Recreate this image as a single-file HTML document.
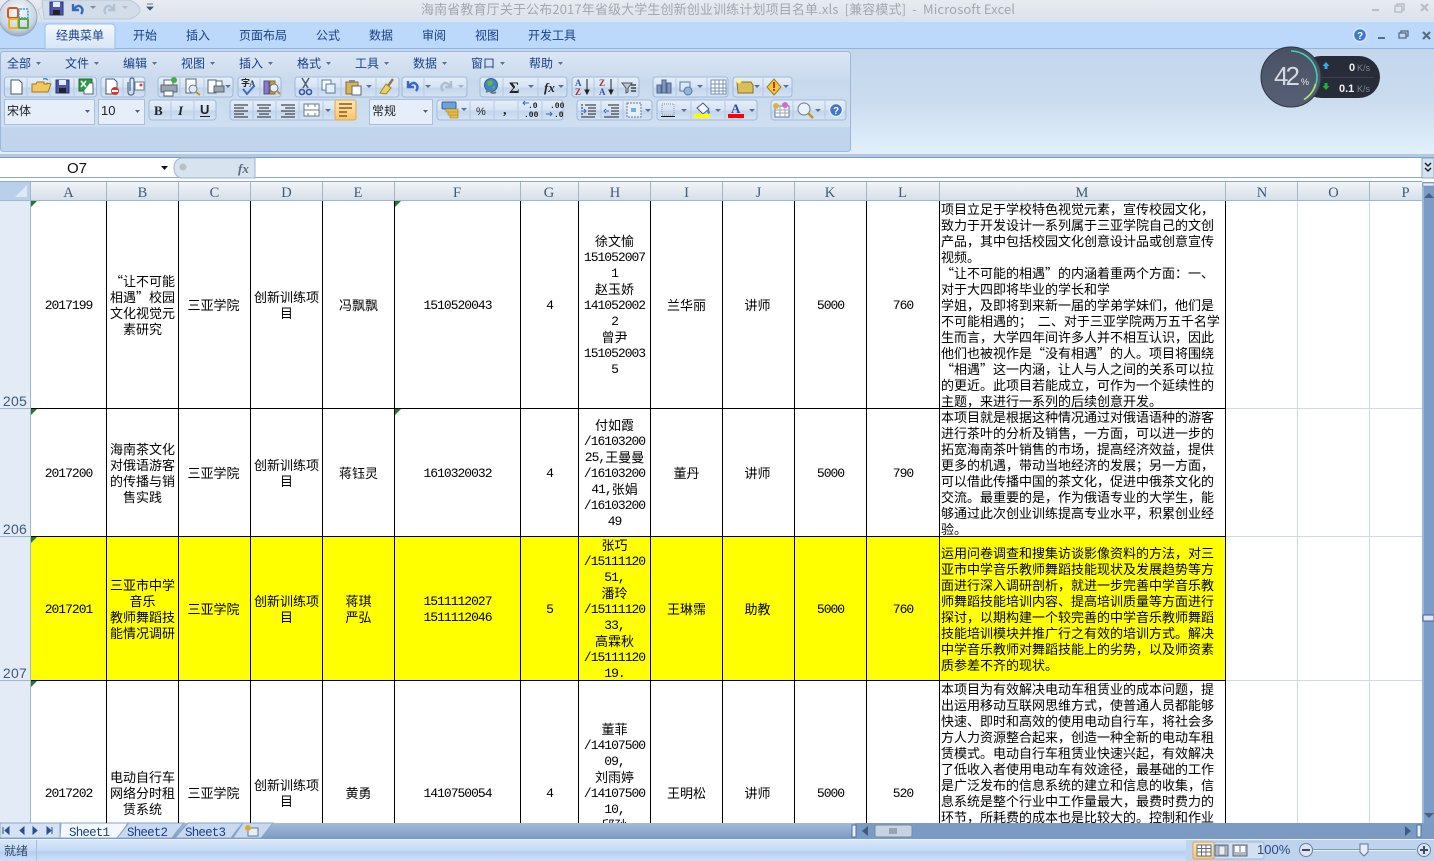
<!DOCTYPE html>
<html lang="zh"><head><meta charset="utf-8"><title>Excel</title>
<style>
html,body{margin:0;padding:0;background:#fff;overflow:hidden}
#p{position:relative;width:1434px;height:861px;overflow:hidden;font:13px/16px "WenQuanYi Zen Hei","Noto Sans CJK SC",sans-serif;color:#000;background:#fff}
#g{position:absolute;left:31px;top:201px;width:1391px;height:622px;overflow:hidden}
.c{position:absolute;display:flex;flex-direction:column;justify-content:center;text-align:center;white-space:nowrap;overflow:visible}
.c div{height:16px}
.n{font:13px/16px "Liberation Mono",monospace;letter-spacing:-1px;transform:translateY(1px)}
span.n{display:inline-block;vertical-align:top}
.m{position:absolute;left:910px;white-space:pre}
.m div{height:16px}
.vl{position:absolute;top:0;width:1px;height:622px;background:#000}
.hl{position:absolute;left:0;width:1195px;height:1px;background:#000}
.lv{position:absolute;top:0;width:1px;height:622px;background:#d0d7e5}
.lh{position:absolute;left:1195px;width:196px;height:1px;background:#d0d7e5}
.t{position:absolute;left:0;top:0;overflow:hidden}
text{white-space:pre}
.tri{position:absolute;width:0;height:0;border-top:6px solid #1e7b2e;border-right:6px solid transparent}
.rn{position:absolute;left:0;width:30px;height:16px;font:14px/16px "Liberation Sans",sans-serif;color:#3e5a78;text-align:center;letter-spacing:.3px}
</style></head><body><div id="p">

<svg class="t" width="1434" height="861" viewBox="0 0 1434 861" font-family="'Noto Sans CJK SC','Liberation Sans',sans-serif">
<defs>
<linearGradient id="tb" x1="0" y1="0" x2="0" y2="1"><stop offset="0" stop-color="#e9ebef"/><stop offset="1" stop-color="#dbe2ec"/></linearGradient>
<linearGradient id="rib" x1="0" y1="0" x2="0" y2="1"><stop offset="0" stop-color="#c3d6ec"/><stop offset=".5" stop-color="#cbdcef"/><stop offset="1" stop-color="#e2f0fb"/></linearGradient>
<linearGradient id="pan" x1="0" y1="0" x2="0" y2="1"><stop offset="0" stop-color="#dbe6f4"/><stop offset=".3" stop-color="#c9d9ed"/><stop offset=".75" stop-color="#cfdff1"/><stop offset=".76" stop-color="#c1d5ec"/><stop offset="1" stop-color="#c1d4eb"/></linearGradient>
<linearGradient id="pill" x1="0" y1="0" x2="0" y2="1"><stop offset="0" stop-color="#e6eff9"/><stop offset=".5" stop-color="#d6e3f3"/><stop offset=".55" stop-color="#c3d5ec"/><stop offset="1" stop-color="#d5e3f4"/></linearGradient>
<linearGradient id="tab" x1="0" y1="0" x2="0" y2="1"><stop offset="0" stop-color="#f4f8fd"/><stop offset="1" stop-color="#d7e5f6"/></linearGradient>
<linearGradient id="hdr" x1="0" y1="0" x2="0" y2="1"><stop offset="0" stop-color="#f2f5f9"/><stop offset="1" stop-color="#d6dfea"/></linearGradient>
<linearGradient id="st" x1="0" y1="0" x2="0" y2="1"><stop offset="0" stop-color="#d8e6f8"/><stop offset=".5" stop-color="#c6daf5"/><stop offset=".55" stop-color="#b5cdf0"/><stop offset="1" stop-color="#cfe0f7"/></linearGradient>
<linearGradient id="sb" x1="0" y1="0" x2="0" y2="1"><stop offset="0" stop-color="#a3bad9"/><stop offset="1" stop-color="#7a9ac4"/></linearGradient>
<linearGradient id="or" x1="0" y1="0" x2="0" y2="1"><stop offset="0" stop-color="#fde5b4"/><stop offset="1" stop-color="#fbc76c"/></linearGradient>
<radialGradient id="off" cx=".5" cy=".35" r=".7"><stop offset="0" stop-color="#fbfbfb"/><stop offset=".7" stop-color="#c6d4e4"/><stop offset="1" stop-color="#8d9bb0"/></radialGradient>
<linearGradient id="dial" x1="0" y1="0" x2="0" y2="1"><stop offset="0" stop-color="#4a5164"/><stop offset="1" stop-color="#565f74"/></linearGradient>
</defs>

<!-- title bar -->
<rect width="1434" height="21" fill="url(#tb)"/>
<rect x="0" y="21" width="1434" height="28" fill="#bcd8fb"/>
<rect x="0" y="21" width="1434" height="1" fill="#d3e4f8"/>
<rect x="0" y="48" width="1434" height="1" fill="#8fb4e2"/>
<rect x="0" y="49" width="1434" height="105" fill="url(#rib)"/>
<rect x="0" y="154" width="1434" height="3" fill="#b3c9e3"/>
<path d="M42 0v5q0 3-4 5l4 11" fill="none" stroke="#c5d3e4"/>
<path d="M42 0H130q10 5 10 10t-10 9H44z" fill="#d3dde9" stroke="#bbc8d8"/>
<text x="421" y="14" font-size="13" fill="#a2a8af" textLength="594" lengthAdjust="spacing">海南省教育厅关于公布2017年省级大学生创新创业训练计划项目名单.xls  [兼容模式]  -  Microsoft Excel</text>

<!-- office button -->
<circle cx="18" cy="17" r="19" fill="url(#off)" stroke="#9aa8ba"/>
<rect x="8" y="8" width="10" height="10" rx="2" fill="none" stroke="#d9541e" stroke-width="2"/>
<rect x="19" y="9" width="9" height="9" rx="1" fill="none" stroke="#3c9bd0" stroke-width="1.5" stroke-dasharray="2 1"/>
<rect x="9" y="19" width="9" height="9" rx="1" fill="none" stroke="#f2b01e" stroke-width="2"/>
<rect x="19" y="19" width="9" height="9" rx="1" fill="none" stroke="#5ca63a" stroke-width="2"/>

<!-- quick access -->
<rect x="50" y="2" width="13" height="13" fill="#4c55b0" stroke="#2a3180"/><rect x="53" y="2" width="7" height="5" fill="#e8edf5"/><rect x="53" y="10" width="7" height="5" fill="#222"/>
<path d="M73 4v6h6M74 9q4-5 7-2t0 7" fill="none" stroke="#3569c4" stroke-width="2.400"/>
<path d="M90 6l3 3 3-3z" fill="#7e8ca0"/>
<path d="M114 4v6h-6M113 9q-4-5-7-2t0 7" fill="none" stroke="#b3c2d2" stroke-width="2.400"/>
<path d="M122 6l3 3 3-3z" fill="#b4becb"/>
<path d="M147 4h6M147 7l3 3 3-3z" fill="#3e5676" stroke="#3e5676" stroke-width=".8"/>

<!-- window controls -->
<rect x="1372" y="9" width="7" height="2" fill="#b6bdc7"/>
<rect x="1397" y="4" width="7" height="6" fill="none" stroke="#b6bdc7" stroke-width="1.400"/><rect x="1395" y="6" width="7" height="6" fill="#e2e6ec" stroke="#b6bdc7" stroke-width="1.400"/>
<path d="M1421 4l7 7M1428 4l-7 7" stroke="#b6bdc7" stroke-width="2.200"/>
<circle cx="1360" cy="35" r="6.500" fill="#3f78c9" stroke="#dfe9f6" stroke-width="1.400"/><text x="1360" y="39" font-size="10" font-weight="bold" fill="#fff" text-anchor="middle" font-family="'Liberation Sans'">?</text>
<rect x="1378" y="37" width="7" height="2" fill="#5a6c80"/>
<rect x="1401" y="31" width="7" height="5" fill="none" stroke="#5a6c80" stroke-width="1.300"/><rect x="1399" y="33" width="7" height="5" fill="#bcd8fb" stroke="#5a6c80" stroke-width="1.300"/>
<path d="M1423 32l7 7M1430 32l-7 7" stroke="#5a6c80" stroke-width="2.200"/>

<!-- ribbon tabs -->
<path d="M45 49V28q0-4 4-4h62q4 0 4 4v21z" fill="url(#tab)" stroke="#9ebfe8"/>
<g font-size="12" fill="#17408a">
<text x="56" y="39.500" textLength="48">经典菜单</text>
<text x="133" y="39.500" textLength="24">开始</text>
<text x="186" y="39.500" textLength="24">插入</text>
<text x="239" y="39.500" textLength="48">页面布局</text>
<text x="316" y="39.500" textLength="24">公式</text>
<text x="369" y="39.500" textLength="24">数据</text>
<text x="422" y="39.500" textLength="24">审阅</text>
<text x="475" y="39.500" textLength="24">视图</text>
<text x="528" y="39.500" textLength="48">开发工具</text>
</g>

<!-- panel -->
<rect x="0.500" y="51.500" width="850" height="100" rx="3" fill="url(#pan)" stroke="#9bb8dc"/>
<g font-size="12" fill="#17408a">
<text x="7" y="67.500">全部</text><text x="65" y="67.500">文件</text><text x="123" y="67.500">编辑</text><text x="181" y="67.500">视图</text><text x="239" y="67.500">插入</text><text x="297" y="67.500">格式</text><text x="355" y="67.500">工具</text><text x="413" y="67.500">数据</text><text x="471" y="67.500">窗口</text><text x="529" y="67.500">帮助</text>
</g>
<g fill="#5a7196">
<path d="M36 62h5l-2.500 3zM94 62h5l-2.500 3zM152 62h5l-2.500 3zM210 62h5l-2.500 3zM268 62h5l-2.500 3zM326 62h5l-2.500 3zM384 62h5l-2.500 3zM442 62h5l-2.500 3zM500 62h5l-2.500 3zM558 62h5l-2.500 3z"/>
</g>

<!-- toolbar pills -->
<g fill="url(#pill)" stroke="#9fb9da">
<rect x="4.500" y="77" width="92" height="20" rx="3"/><rect x="101" y="77" width="44" height="20" rx="3"/>
<rect x="158" y="77" width="75" height="20" rx="3"/><rect x="238" y="77" width="43" height="20" rx="3"/>
<rect x="295" y="77" width="104" height="20" rx="3"/><rect x="402" y="77" width="65" height="20" rx="3"/>
<rect x="480" y="77" width="87" height="20" rx="3"/><rect x="572" y="77" width="67" height="20" rx="3"/>
<rect x="653" y="77" width="75" height="20" rx="3"/><rect x="733" y="77" width="59" height="20" rx="3"/>
<rect x="149" y="100" width="67" height="20" rx="3"/><rect x="230" y="100" width="126" height="20" rx="3"/>
<rect x="437" y="100" width="126" height="20" rx="3"/><rect x="577" y="100" width="75" height="20" rx="3"/>
<rect x="657" y="100" width="100" height="20" rx="3"/><rect x="771" y="100" width="75" height="20" rx="3"/>
</g>
<path d="M27 78v18M50 78v18M74 78v18M123 78v18M180 78v18M204 78v18M260 78v18M318 78v18M341 78v18M376 78v18M424 78v18M503 78v18M538 78v18M594 78v18M618 78v18M676 78v18M707 78v18M763 78v18M171 101v18M194 101v18M253 101v18M276 101v18M299 101v18M323 101v18M470 101v18M494 101v18M518 101v18M542 101v18M601 101v18M623 101v18M691 101v18M725 101v18M793 101v18M825 101v18" stroke="#b5c9e2" fill="none"/>
<rect x="335" y="100" width="21" height="20" rx="2" fill="url(#or)" stroke="#d9a85c"/>

<!-- row2 icons -->
<path d="M11 80h8l3 3v11H11z" fill="#fff" stroke="#4a5a6e"/>
<path d="M32 92V84h4l1-2h7v2h3v-1l4 1-3 8z" fill="#f2c75c" stroke="#9a7a2a"/><path d="M43 79q3-1 5 1" stroke="#3c7fc0" fill="none" stroke-width="1.400"/>
<rect x="56" y="80" width="13" height="13" fill="#4c55b0" stroke="#2a3180"/><rect x="59" y="80" width="7" height="5" fill="#e8edf5"/><rect x="59" y="88" width="7" height="5" fill="#222"/>
<rect x="79" y="79" width="13" height="12" fill="#2e9a45" stroke="#1f6b30"/><path d="M81 81l5 6M86 81l-5 6" stroke="#fff" stroke-width="1.400"/><path d="M90 83h3v11H84v-3" fill="#fff" stroke="#56687e"/>
<path d="M106 79h8l3 3v12h-11z" fill="#fff" stroke="#4a5a6e"/><circle cx="115" cy="91" r="4" fill="#d8342c"/><rect x="112" y="90" width="6" height="2" fill="#fff"/>
<path d="M128 82v10q0 3 3 3t3-3V80q0-2-2-2t-2 2v11" fill="none" stroke="#4d6a8a" stroke-width="1.200"/><rect x="135" y="82" width="9" height="8" fill="#fff" stroke="#6a7c92"/><circle cx="141" cy="85" r="1.500" fill="#d44"/>
<rect x="161" y="85" width="16" height="7" fill="#9aa5b2" stroke="#5a6470"/><rect x="164" y="80" width="9" height="5" fill="#fff" stroke="#5a6470"/><rect x="164" y="91" width="9" height="5" fill="#fff" stroke="#5a6470"/><circle cx="174" cy="80" r="3" fill="#4aa948"/>
<path d="M186 79h10v8l-3 1v5h-7z" fill="#fff" stroke="#5a6470"/><circle cx="193" cy="89" r="4" fill="#dfe9f4" stroke="#6a7a90"/><path d="M196 92l4 3" stroke="#c98e22" stroke-width="2"/>
<rect x="208" y="80" width="8" height="13" fill="#fff" stroke="#5a6470"/><rect x="214" y="86" width="10" height="6" fill="#9aa5b2" stroke="#5a6470"/><rect x="216" y="81" width="6" height="5" fill="#fff" stroke="#5a6470"/><path d="M225 85h6l-3 3z" fill="#5a7196"/>
<text x="241" y="86" font-size="9" font-weight="bold" fill="#222">字</text><text x="249" y="87" font-size="9" font-weight="bold" fill="#2a4a9a" font-family="'Liberation Serif'">A</text><path d="M243 89l4 5 7-8" fill="none" stroke="#3b6ec4" stroke-width="2"/>
<rect x="264" y="81" width="5" height="13" fill="#8c78c8" stroke="#5a4a90"/><rect x="270" y="81" width="5" height="13" fill="#c7a040" stroke="#8a6e20"/><circle cx="274" cy="88" r="4" fill="#e6eef8" stroke="#607088"/><path d="M277 91l3 3" stroke="#c98e22" stroke-width="2"/>
<path d="M302 78l6 10M309 78l-6 10" stroke="#4a5d78" stroke-width="1.500"/><circle cx="302" cy="92" r="2.500" fill="none" stroke="#3a55a4" stroke-width="1.600"/><circle cx="309" cy="92" r="2.500" fill="none" stroke="#3a55a4" stroke-width="1.600"/>
<rect x="322" y="80" width="9" height="10" fill="#fff" stroke="#5a78a0"/><rect x="326" y="84" width="9" height="9" fill="#e6f0fa" stroke="#5a78a0"/>
<rect x="346" y="82" width="12" height="12" fill="#d9b457" stroke="#8a6d25"/><rect x="349" y="80" width="6" height="3" fill="#888"/><rect x="352" y="86" width="9" height="9" fill="#fff" stroke="#5a6470"/><path d="M366 85h6l-3 3z" fill="#5a7196"/>
<path d="M393 79l-5 7" stroke="#8a7a4a" stroke-width="2.400"/><path d="M386 84l5 4-5 6-6-1z" fill="#f2d060" stroke="#a08828"/>
<path d="M408 81v6h6M409 86q4-5 7-2t0 7" fill="none" stroke="#3569c4" stroke-width="2.400"/><path d="M425 85h6l-3 3z" fill="#5a7196"/>
<path d="M451 81v6h-6M450 86q-4-5-7-2t0 7" fill="none" stroke="#aebccd" stroke-width="2.400"/><path d="M458 85h6l-3 3z" fill="#a8b4c4"/>
<circle cx="491" cy="85" r="6.500" fill="#3f86c9" stroke="#2d6296"/><path d="M487 82q3-3 6-1l-1 4-4 1zM492 87l3-1-1 4z" fill="#6ab04a"/><path d="M486 92q3-2 5 0t5 0" fill="none" stroke="#707a88" stroke-width="2"/>
<text x="509" y="93" font-size="16" font-weight="bold" fill="#222" font-family="'Liberation Serif'">Σ</text><path d="M528 85h6l-3 3z" fill="#5a7196"/>
<text x="544" y="92" font-size="13" font-style="italic" font-weight="bold" fill="#222" font-family="'Liberation Serif'">fx</text><path d="M558 85h6l-3 3z" fill="#5a7196"/>
<text x="575" y="86" font-size="9" font-weight="bold" fill="#3a5aa4" font-family="'Liberation Serif'">A</text><text x="575" y="95" font-size="9" font-weight="bold" fill="#a0303a" font-family="'Liberation Serif'">Z</text><path d="M587 79v14M585 90l2 4 2-4z" stroke="#222" fill="#222"/>
<text x="599" y="86" font-size="9" font-weight="bold" fill="#a0303a" font-family="'Liberation Serif'">Z</text><text x="599" y="95" font-size="9" font-weight="bold" fill="#3a5aa4" font-family="'Liberation Serif'">A</text><path d="M611 79v14M609 90l2 4 2-4z" stroke="#222" fill="#222"/>
<path d="M622 83h10l-4 5v4l-2 1v-5z" fill="#c2c8d0" stroke="#4a5560"/><path d="M631 85h5M631 88h5M631 91h5" stroke="#222" stroke-width="1.300"/>
<path d="M657 93v-8h4v8zM662 93V80h4v13zM667 93v-10h4v10z" fill="#7f97bf" stroke="#4f658e"/>
<rect x="680" y="82" width="10" height="9" fill="#dbe8f6" stroke="#5a78a0"/><ellipse cx="688" cy="91" rx="4" ry="4" fill="#8eb6e0" stroke="#5a78a0"/><path d="M697 85h6l-3 3z" fill="#5a7196"/>
<g stroke="#7a90b4" fill="#fff"><rect x="711" y="80" width="15" height="14"/><path d="M711 84h15M711 88h15M711 91h15M715 80v14M719 80v14M723 80v14" fill="none"/></g>
<path d="M737 82h14l2 3v8h-15z" fill="#d9be5c" stroke="#8a7425"/><circle cx="739" cy="81" r="2.500" fill="#fff28a"/><path d="M754 85h6l-3 3z" fill="#5a7196"/>
<path d="M774 79l7 8-7 8-7-8z" fill="#f4c93a" stroke="#a47c1c"/><rect x="773" y="82" width="2" height="6" fill="#d0312d"/><rect x="773" y="89" width="2" height="2" fill="#d0312d"/><path d="M783 85h6l-3 3z" fill="#5a7196"/>

<!-- combos -->
<g fill="#e6eef9" stroke="#a9c0dc"><rect x="4.500" y="99.500" width="90" height="25"/><rect x="98.500" y="99.500" width="46" height="25"/><rect x="369.500" y="99.500" width="63" height="25"/></g>
<path d="M85 110h5l-2.500 3zM135 110h5l-2.500 3zM423 110h5l-2.500 3z" fill="#4b6287"/>
<text x="7" y="115" font-size="12" fill="#222">宋体</text>
<text x="101" y="115" font-size="13" fill="#222" font-family="'Liberation Sans'">10</text>
<text x="372" y="115" font-size="12" fill="#222">常规</text>

<!-- row3 icons -->
<text x="154" y="115" font-size="13" font-weight="bold" fill="#222" font-family="'Liberation Serif'">B</text>
<text x="178" y="115" font-size="13" font-style="italic" font-weight="bold" fill="#222" font-family="'Liberation Serif'">I</text>
<text x="200" y="114" font-size="13" font-weight="bold" fill="#222" font-family="'Liberation Sans'">U</text><rect x="200" y="116" width="10" height="1" fill="#222"/>
<path d="M234 105h14M234 108h10M234 111h14M234 114h10M234 117h14M257 105h14M259 108h10M257 111h14M259 114h10M257 117h14M281 105h14M285 108h10M281 111h14M285 114h10M281 117h14" stroke="#222"/>
<rect x="304" y="104" width="15" height="12" fill="#fff" stroke="#6a7a90"/><path d="M304 110h15M308 104v3M315 104v3M308 113v3M315 113v3" stroke="#6a7a90"/><path d="M325 109h6l-3 3z" fill="#5a7196"/>
<path d="M339 104h13M339 108h13M339 112h8M339 116h8" stroke="#8a5a20" stroke-width="1.400"/>
<rect x="442" y="102" width="14" height="7" rx="1" fill="#6fa0d8" stroke="#355f98"/><path d="M446 109h12v3h-12zM448 112h10v3h-10zM450 115h8v3h-8z" fill="#e8bd44" stroke="#a07c1c" stroke-width=".6"/><path d="M461 108h6l-3 3z" fill="#5a7196"/>
<text x="476" y="115" font-size="11" fill="#222" font-family="'Liberation Sans'">%</text>
<text x="503" y="114" font-size="14" font-weight="bold" fill="#222" font-family="'Liberation Serif'">,</text>
<text x="528" y="108" font-size="8" font-weight="bold" fill="#222" font-family="'Liberation Mono'">.0</text><text x="524" y="117" font-size="8" font-weight="bold" fill="#222" font-family="'Liberation Mono'">.00</text><path d="M529 103h-6M525 101l-2 2 2 2" stroke="#3569c4" fill="none"/>
<text x="550" y="108" font-size="8" font-weight="bold" fill="#222" font-family="'Liberation Mono'">.00</text><text x="554" y="117" font-size="8" font-weight="bold" fill="#222" font-family="'Liberation Mono'">.0</text><path d="M546 114h6M550 112l2 2-2 2" stroke="#3569c4" fill="none"/>
<path d="M585 105h11M588 108h8M588 111h8M588 114h8M581 105h2M581 108h2M581 114h2M581 117h14M608 105h11M611 108h8M611 111h8M611 114h8M604 117h15" stroke="#222"/><path d="M581 111h5M584 109l2 2-2 2M606 111h3M606 109l-2 2 2 2" stroke="#3569c4" fill="none"/>
<rect x="627" y="103" width="14" height="14" fill="#e6eef8" stroke="#6a7a90" stroke-dasharray="2 1"/><rect x="631" y="108" width="5" height="4" fill="#7fa8dc"/><path d="M645 109h6l-3 3z" fill="#5a7196"/>
<rect x="662" y="104" width="12" height="11" fill="none" stroke="#8a95a6" stroke-dasharray="1 1"/><rect x="661" y="116" width="14" height="1" fill="#111"/><path d="M681 109h6l-3 3z" fill="#5a7196"/>
<path d="M697 108l6-5 6 6-6 5z" fill="#f2f6fb" stroke="#4a5a74"/><path d="M708 109q3 3 1 5-3-1-1-5z" fill="#3c7cc0"/><rect x="694" y="114" width="16" height="4" fill="#ffff00"/><path d="M715 109h6l-3 3z" fill="#5a7196"/>
<text x="731" y="113" font-size="13" font-weight="bold" fill="#2f4c9a" font-family="'Liberation Serif'">A</text><rect x="728" y="114" width="16" height="4" fill="#f00"/><path d="M749 109h6l-3 3z" fill="#5a7196"/>
<rect x="775" y="106" width="14" height="11" fill="#fff" stroke="#6a7a90"/><path d="M775 110h14M775 113h14M780 106v11M785 106v11" stroke="#9aa6b8"/><circle cx="785" cy="105" r="3" fill="#d36bc8"/><circle cx="776" cy="106" r="3" fill="#e2b040"/>
<circle cx="804" cy="109" r="6" fill="#eaf1fa" stroke="#6a7a90"/><path d="M808 113l5 5" stroke="#c49128" stroke-width="2.400"/><path d="M815 109h6l-3 3z" fill="#5a7196"/>
<circle cx="836" cy="110" r="6.500" fill="#3f78c9" stroke="#e7eff9" stroke-width="1.500"/><text x="836" y="114" font-size="10" font-weight="bold" fill="#fff" text-anchor="middle" font-family="'Liberation Sans'">?</text>

<!-- net widget -->
<rect x="1300" y="56" width="80" height="42" rx="21" fill="#272c38"/>
<rect x="1312" y="77" width="62" height="1" fill="#3a404e"/>
<circle cx="1291" cy="77" r="30" fill="url(#dial)" stroke="#2f3543" stroke-width="1"/>
<path d="M1291 51A26 26 0 0 1 1304 99.500" fill="none" stroke="#3fd6b8" stroke-width="1.500"/>
<path d="M1315.500 84A26 26 0 0 1 1304 99.500" fill="none" stroke="#b8e06a" stroke-width="1.500"/>
<text x="1274" y="85" font-size="26" fill="#d6d9df" font-family="'Liberation Sans'" textLength="26">42</text>
<text x="1301" y="85" font-size="9" fill="#e8eaee" font-family="'Liberation Sans'">%</text>
<path d="M1326 62l3.500 4h-2v3h-3v-3h-2z" fill="#38a6e8"/>
<path d="M1326 90l3.500-4h-2v-3h-3v3h-2z" fill="#1fb23a"/>
<text x="1349" y="71" font-size="11" font-weight="bold" fill="#eef1f5" font-family="'Liberation Sans'">0</text><text x="1357" y="71" font-size="9" fill="#7f8794" font-family="'Liberation Sans'">K/s</text>
<text x="1339" y="92" font-size="11" font-weight="bold" fill="#eef1f5" font-family="'Liberation Sans'">0.1</text><text x="1357" y="92" font-size="9" fill="#7f8794" font-family="'Liberation Sans'">K/s</text>

<!-- formula bar -->
<rect x="0" y="157" width="1434" height="1" fill="#7f9cbc"/>
<rect x="0" y="158" width="1434" height="20" fill="#fff"/>
<rect x="0" y="177" width="1422" height="1" fill="#8ea9c7"/>
<rect x="0" y="178" width="1434" height="4" fill="#fff"/>
<text x="67" y="173" font-size="15" fill="#111" font-family="'Liberation Sans'">O7</text>
<path d="M161 166h7l-3.500 4z" fill="#111"/>
<path d="M181 158h74v20h-74q-7-2-7-10t7-10z" fill="#d8e3f0" stroke="#9fb4cf"/>
<circle cx="183" cy="167" r="3.500" fill="#b8c0ca"/>
<text x="238" y="173" font-size="13" font-style="italic" font-weight="bold" fill="#5a6a7c" font-family="'Liberation Serif'">fx</text>
<rect x="1422" y="158" width="12" height="20" fill="#d5e2f2" stroke="#8ea9c7"/>
<path d="M1425 163l3 3 3-3M1425 168l3 3 3-3" fill="none" stroke="#111" stroke-width="1.300"/>

<!-- headers -->
<rect x="0" y="181" width="1422" height="1" fill="#8ea9c7"/>
<rect x="0" y="182" width="1422" height="18" fill="url(#hdr)"/>
<rect x="0" y="182" width="30" height="18" fill="#b9d0ea"/>
<path d="M27 185v12H15z" fill="#dfe8f3"/>
<rect x="0" y="200" width="1422" height="1" fill="#9eb6ce"/>
<path d="M30.500 182v18M106.500 182v18M178.500 182v18M250.500 182v18M322.500 182v18M394.500 182v18M520.500 182v18M578.500 182v18M650.500 182v18M722.500 182v18M794.500 182v18M866.500 182v18M939.500 182v18M1225.500 182v18M1297.500 182v18M1369.500 182v18" stroke="#9eb6ce"/>
<g font-size="14.500" fill="#3e5a78" font-family="'Liberation Serif'" text-anchor="middle">
<text x="68.500" y="197">A</text><text x="142.500" y="197">B</text><text x="214.500" y="197">C</text><text x="286.500" y="197">D</text><text x="358" y="197">E</text><text x="457" y="197">F</text><text x="549" y="197">G</text><text x="615" y="197">H</text><text x="686.500" y="197">I</text><text x="758.500" y="197">J</text><text x="830" y="197">K</text><text x="902.500" y="197">L</text><text x="1082" y="197">M</text><text x="1262" y="197">N</text><text x="1333.500" y="197">O</text><text x="1405.500" y="197">P</text>
</g>

<!-- row header col -->
<rect x="0" y="201" width="30" height="622" fill="#e3ebf6"/>
<rect x="30" y="201" width="1" height="622" fill="#9eb6ce"/>
<path d="M0 408.500h30M0 536.500h30M0 680.500h30" stroke="#9eb6ce"/>

<!-- vertical scrollbar -->
<rect x="1422" y="182" width="12" height="641" fill="#7b9cc7"/>
<rect x="1422" y="182" width="2" height="641" fill="#9db7da"/>
<rect x="1423" y="183" width="11" height="3" fill="#e8eff8" stroke="#6d87ab" stroke-width=".6"/>
<path d="M1424 198l5-5 5 5z" fill="#4a5f80"/>
<rect x="1423" y="615" width="11" height="6" fill="#dfe7f2" stroke="#4b5f96"/>
<path d="M1424 813l5 5 5-5z" fill="#4a5f80"/>

<!-- sheet tabs -->
<rect x="0" y="823" width="1434" height="16" fill="url(#sb)"/>
<rect x="855" y="823" width="579" height="16" fill="#7b9bc5"/>
<rect x="0" y="823" width="60" height="15" fill="#d5e2f3" stroke="#8aa6c9"/>
<path d="M3 827v7M9 827l-4 3.500 4 3.500zM24 827l-4 3.500 4 3.500zM33 827l4 3.500-4 3.500zM47 827l4 3.500-4 3.500zM52 827v7" fill="#2c4f8a" stroke="#2c4f8a"/>
<path d="M60 838h57l7-9 4-6H61z" fill="#f4f8fd" stroke="#8aa6c9"/>
<path d="M117 838h55l5-7 7-8h-55z" fill="#c9daf0" stroke="#8aa6c9"/>
<path d="M175 838h56l5-7 7-8h-55z" fill="#c9daf0" stroke="#8aa6c9"/>
<path d="M233 838h28l12-15h-30z" fill="#c9daf0" stroke="#8aa6c9"/>
<g font-size="12.500" fill="#17408a" font-family="'Liberation Mono'">
<text x="69" y="836" textLength="41">Sheet1</text><text x="127" y="836" textLength="41">Sheet2</text><text x="185" y="836" textLength="41">Sheet3</text>
</g>
<rect x="248" y="828" width="10" height="8" fill="#e6eef8" stroke="#5a7aa0"/><circle cx="248" cy="828" r="3" fill="#e8a52e"/>
<rect x="852" y="825" width="4" height="12" fill="#e9f1fa" stroke="#4f6f9e"/>
<path d="M868 826v10l-6-5z" fill="#3f5a7c"/>
<rect x="875" y="825" width="37" height="12" rx="2" fill="#c8d3e2" stroke="#7a8ba4"/>
<path d="M890 828v6M892 828v6M894 828v6M896 828v6" stroke="#66758a"/>
<path d="M1405 826v10l6-5z" fill="#3f5a7c"/>
<rect x="1417" y="825" width="4" height="12" fill="#e9f1fa" stroke="#4f6f9e"/>

<!-- status bar -->
<rect x="0" y="839" width="1434" height="1" fill="#eaf2fc"/>
<rect x="0" y="840" width="1434" height="21" fill="url(#st)"/>
<rect x="36" y="840" width="1" height="21" fill="#a8bfdc"/>
<rect x="1186" y="840" width="248" height="21" fill="#bfd3ee"/>
<text x="4" y="855" font-size="12" fill="#2c4a6e">就绪</text>
<rect x="1193" y="842" width="21" height="17" rx="2" fill="url(#or)" stroke="#d1a55e"/>
<rect x="1214" y="842" width="50" height="17" rx="2" fill="#d3e0f1" stroke="#9fb7d6"/>
<rect x="1197" y="845" width="14" height="11" fill="#fff" stroke="#606c7c"/><path d="M1197 848.500h14M1197 852h14M1201.500 845v11M1206 845v11" stroke="#606c7c"/>
<rect x="1215" y="845" width="13" height="11" fill="#aeb7c4" stroke="#606c7c"/><rect x="1219" y="846" width="6" height="9" fill="#e8edf4" stroke="#8a95a4"/>
<rect x="1233" y="845" width="14" height="11" fill="#aeb7c4" stroke="#606c7c"/><rect x="1235" y="846" width="4" height="6" fill="#fff"/><rect x="1241" y="846" width="4" height="6" fill="#fff"/>
<text x="1257" y="854" font-size="13" fill="#2c4a7a" font-family="'Liberation Sans'">100%</text>
<circle cx="1306" cy="850" r="6.500" fill="#dde6f2" stroke="#6880a4"/><rect x="1302" y="849" width="8" height="2" fill="#3e4c62"/>
<rect x="1313" y="849" width="103" height="1" fill="#7d98bd"/><rect x="1313" y="850" width="103" height="1" fill="#eef4fb"/>
<path d="M1360 844h8v8l-4 4-4-4z" fill="#e6edf6" stroke="#5f7697"/>
<circle cx="1424" cy="850" r="6.500" fill="#dde6f2" stroke="#6880a4"/><path d="M1420 850h8M1424 846v8" stroke="#3e4c62" stroke-width="2"/>
</svg>

<div class="rn" style="top:393px">205</div>
<div class="rn" style="top:521px">206</div>
<div class="rn" style="top:665px">207</div>

<!-- grid -->
<div id="g">
<div style="position:absolute;left:0;top:336px;width:1195px;height:143px;background:#ff0"></div>

<div class="lv" style="left:1266px"></div><div class="lv" style="left:1338px"></div>
<div class="lh" style="top:207px"></div><div class="lh" style="top:335px"></div><div class="lh" style="top:479px"></div>

<div class="vl" style="left:75px"></div><div class="vl" style="left:147px"></div><div class="vl" style="left:219px"></div><div class="vl" style="left:291px"></div><div class="vl" style="left:363px"></div><div class="vl" style="left:489px"></div><div class="vl" style="left:547px"></div><div class="vl" style="left:619px"></div><div class="vl" style="left:691px"></div><div class="vl" style="left:763px"></div><div class="vl" style="left:835px"></div><div class="vl" style="left:908px"></div><div class="vl" style="left:1194px"></div>
<div class="hl" style="top:207px"></div><div class="hl" style="top:335px"></div><div class="hl" style="top:479px"></div>

<div class="tri" style="left:0;top:0"></div><div class="tri" style="left:364px;top:0"></div>
<div class="tri" style="left:0;top:208px"></div><div class="tri" style="left:364px;top:208px"></div>
<div class="tri" style="left:0;top:336px"></div>
<div class="tri" style="left:0;top:480px"></div>

<!-- row 205 -->
<div class="c n" style="left:0;top:0;width:75px;height:207px">2017199</div>
<div class="c" style="left:76px;top:0;width:71px;height:207px"><div>“让不可能</div><div>相遇”校园</div><div>文化视觉元</div><div>素研究</div></div>
<div class="c" style="left:147px;top:0;width:71px;height:207px">三亚学院</div>
<div class="c" style="left:220px;top:0;width:71px;height:207px"><div>创新训练项</div><div>目</div></div>
<div class="c" style="left:292px;top:0;width:71px;height:207px">冯飘飘</div>
<div class="c n" style="left:364px;top:0;width:125px;height:207px">1510520043</div>
<div class="c n" style="left:490px;top:0;width:57px;height:207px">4</div>
<div class="c" style="left:548px;top:0;width:71px;height:207px"><div>徐文愉</div><div class="n">151052007</div><div class="n">1</div><div>赵玉娇</div><div class="n">141052002</div><div class="n">2</div><div>曾尹</div><div class="n">151052003</div><div class="n">5</div></div>
<div class="c" style="left:620px;top:0;width:71px;height:207px">兰华丽</div>
<div class="c" style="left:691px;top:0;width:71px;height:207px">讲师</div>
<div class="c n" style="left:764px;top:0;width:71px;height:207px">5000</div>
<div class="c n" style="left:836px;top:0;width:72px;height:207px">760</div>
<div class="m" style="top:0"><div>项目立足于学校特色视觉元素，宣传校园文化，</div><div>致力于开发设计一系列属于三亚学院自己的文创</div><div>产品，其中包括校园文化创意设计品或创意宣传</div><div>视频。</div><div>“让不可能的相遇”的内涵着重两个方面：一、</div><div>对于大四即将毕业的学长和学</div><div>学姐，及即将到来新一届的学弟学妹们，他们是</div><div>不可能相遇的；  二、对于三亚学院两万五千名学</div><div>生而言，大学四年间许多人并不相互认识，因此</div><div>他们也被视作是“没有相遇”的人。项目将围绕</div><div>“相遇”这一内涵，让人与人之间的关系可以拉</div><div>的更近。此项目若能成立，可作为一个延续性的</div><div>主题，来进行一系列的后续创意开发。</div></div>

<!-- row 206 -->
<div class="c n" style="left:0;top:208px;width:75px;height:127px">2017200</div>
<div class="c" style="left:76px;top:208px;width:71px;height:127px"><div>海南茶文化</div><div>对俄语游客</div><div>的传播与销</div><div>售实践</div></div>
<div class="c" style="left:147px;top:208px;width:71px;height:127px">三亚学院</div>
<div class="c" style="left:220px;top:208px;width:71px;height:127px"><div>创新训练项</div><div>目</div></div>
<div class="c" style="left:292px;top:208px;width:71px;height:127px">蒋钰灵</div>
<div class="c n" style="left:364px;top:208px;width:125px;height:127px">1610320032</div>
<div class="c n" style="left:490px;top:208px;width:57px;height:127px">4</div>
<div class="c" style="left:548px;top:208px;width:71px;height:127px"><div>付如霞</div><div class="n">/16103200</div><div><span class="n">25,</span>王曼曼</div><div class="n">/16103200</div><div><span class="n">41,</span>张娟</div><div class="n">/16103200</div><div class="n">49</div></div>
<div class="c" style="left:620px;top:208px;width:71px;height:127px">董丹</div>
<div class="c" style="left:691px;top:208px;width:71px;height:127px">讲师</div>
<div class="c n" style="left:764px;top:208px;width:71px;height:127px">5000</div>
<div class="c n" style="left:836px;top:208px;width:72px;height:127px">790</div>
<div class="m" style="top:208px"><div>本项目就是根据这种情况通过对俄语语种的游客</div><div>进行茶叶的分析及销售，一方面，可以进一步的</div><div>拓宽海南茶叶销售的市场，提高经济效益，提供</div><div>更多的机遇，带动当地经济的发展；另一方面，</div><div>可以借此传播中国的茶文化，促进中俄茶文化的</div><div>交流。最重要的是，作为俄语专业的大学生，能</div><div>够通过此次创业训练提高专业水平，积累创业经</div><div>验。</div></div>

<!-- row 207 -->
<div class="c n" style="left:0;top:336px;width:75px;height:143px">2017201</div>
<div class="c" style="left:76px;top:336px;width:71px;height:143px"><div>三亚市中学</div><div>音乐</div><div>教师舞蹈技</div><div>能情况调研</div></div>
<div class="c" style="left:147px;top:336px;width:71px;height:143px">三亚学院</div>
<div class="c" style="left:220px;top:336px;width:71px;height:143px"><div>创新训练项</div><div>目</div></div>
<div class="c" style="left:292px;top:336px;width:71px;height:143px"><div>蒋琪</div><div>严弘</div></div>
<div class="c n" style="left:364px;top:336px;width:125px;height:143px"><div>1511112027</div><div>1511112046</div></div>
<div class="c n" style="left:490px;top:336px;width:57px;height:143px">5</div>
<div class="c" style="left:548px;top:336px;width:71px;height:143px"><div>张巧</div><div class="n">/15111120</div><div class="n">51,</div><div>潘玲</div><div class="n">/15111120</div><div class="n">33,</div><div>高霖秋</div><div class="n">/15111120</div><div class="n">19.</div></div>
<div class="c" style="left:620px;top:336px;width:71px;height:143px">王琳霈</div>
<div class="c" style="left:691px;top:336px;width:71px;height:143px">助教</div>
<div class="c n" style="left:764px;top:336px;width:71px;height:143px">5000</div>
<div class="c n" style="left:836px;top:336px;width:72px;height:143px">760</div>
<div class="m" style="top:344px"><div>运用问卷调查和搜集访谈影像资料的方法，对三</div><div>亚市中学音乐教师舞蹈技能现状及发展趋势等方</div><div>面进行深入调研剖析，就进一步完善中学音乐教</div><div>师舞蹈技能培训内容、提高培训质量等方面进行</div><div>探讨，以期构建一个较完善的中学音乐教师舞蹈</div><div>技能培训模块并推广行之有效的培训方式。解决</div><div>中学音乐教师对舞蹈技能上的劣势，以及师资素</div><div>质参差不齐的现状。</div></div>

<!-- row 208 -->
<div class="c n" style="left:0;top:532px;width:75px;height:120px">2017202</div>
<div class="c" style="left:76px;top:532px;width:71px;height:120px"><div>电动自行车</div><div>网络分时租</div><div>赁系统</div></div>
<div class="c" style="left:147px;top:532px;width:71px;height:120px">三亚学院</div>
<div class="c" style="left:220px;top:532px;width:71px;height:120px"><div>创新训练项</div><div>目</div></div>
<div class="c" style="left:292px;top:532px;width:71px;height:120px">黄勇</div>
<div class="c n" style="left:364px;top:532px;width:125px;height:120px">1410750054</div>
<div class="c n" style="left:490px;top:532px;width:57px;height:120px">4</div>
<div class="c" style="left:548px;top:520px;width:71px;height:112px"><div>董菲</div><div class="n">/14107500</div><div class="n">09,</div><div>刘雨婷</div><div class="n">/14107500</div><div class="n">10,</div><div>邱孙</div></div>
<div class="c" style="left:620px;top:532px;width:71px;height:120px">王明松</div>
<div class="c" style="left:691px;top:532px;width:71px;height:120px">讲师</div>
<div class="c n" style="left:764px;top:532px;width:71px;height:120px">5000</div>
<div class="c n" style="left:836px;top:532px;width:72px;height:120px">520</div>
<div class="m" style="top:480px"><div>本项目为有效解决电动车租赁业的成本问题，提</div><div>出运用移动互联网思维方式，使普通人员都能够</div><div>快速、即时和高效的使用电动自行车，将社会多</div><div>方人力资源整合起来，创造一种全新的电动车租</div><div>赁模式。电动自行车租赁业快速兴起，有效解决</div><div>了低收入者使用电动车有效途径，最基础的工作</div><div>是广泛发布的信息系统的建立和信息的收集，信</div><div>息系统是整个行业中工作量最大，最费时费力的</div><div>环节，所耗费的成本也是比较大的。控制和作业</div></div>
</div>
</div></body></html>
